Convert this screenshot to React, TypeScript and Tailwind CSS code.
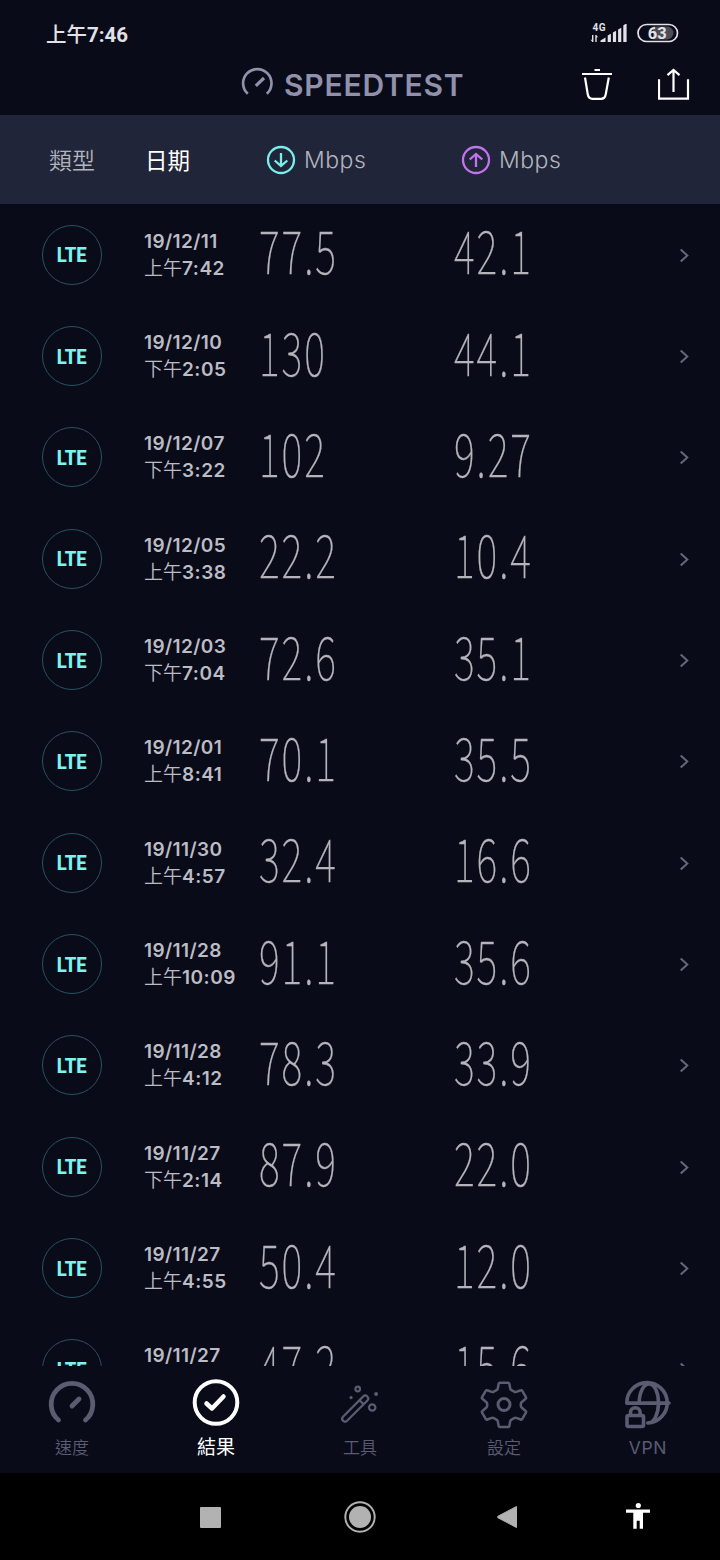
import React from 'react';

type Result = { date: string; half?: string; time?: string; down: string; up: string };

const results: Result[] = [
  { date: '19/12/11', half: '上午', time: '7:42', down: '77.5', up: '42.1' },
  { date: '19/12/10', half: '下午', time: '2:05', down: '130', up: '44.1' },
  { date: '19/12/07', half: '下午', time: '3:22', down: '102', up: '9.27' },
  { date: '19/12/05', half: '上午', time: '3:38', down: '22.2', up: '10.4' },
  { date: '19/12/03', half: '下午', time: '7:04', down: '72.6', up: '35.1' },
  { date: '19/12/01', half: '上午', time: '8:41', down: '70.1', up: '35.5' },
  { date: '19/11/30', half: '上午', time: '4:57', down: '32.4', up: '16.6' },
  { date: '19/11/28', half: '上午', time: '10:09', down: '91.1', up: '35.6' },
  { date: '19/11/28', half: '上午', time: '4:12', down: '78.3', up: '33.9' },
  { date: '19/11/27', half: '下午', time: '2:14', down: '87.9', up: '22.0' },
  { date: '19/11/27', half: '上午', time: '4:55', down: '50.4', up: '12.0' },
  { date: '19/11/27', down: '47.2', up: '15.6' },
];

const CJK = "font-['Noto_Sans_CJK_TC',sans-serif]";
const LATIN = "font-['Inter','Noto_Sans_CJK_TC',sans-serif]";

function StatusBar() {
  return (
    <div className="flex h-[54px] items-start justify-between pl-[46px] pr-[41px] pt-[21px]">
      <div className="flex items-baseline leading-6 text-[#e2e2e6]">
        <span className={`${CJK} text-[20.5px] font-medium`}>上午</span>
        <span className="font-['Roboto',sans-serif] text-[20.5px] font-bold">7:46</span>
      </div>
      <div className="flex pt-[1px]">
        <svg width="38" height="22" viewBox="0 0 38 22" fill="#e2e2e6">
          <text x="3.500" y="8.500" fontSize="10" fontWeight="700" fontFamily="Roboto, sans-serif" textLength="13">4G</text>
          <path d="M3 13h1.400v7H3.400L1.600 17.800H3zM6.300 20v-7h1L9 15.200H7.700V20z" />
          <path d="M11.500 20v-1.500l5-3V20zM18.700 20v-6.500l3.200-1.800V20zM23.900 20v-9.500l3.200-1.700V20zM29.100 20V7.500l3.200-1.700V20zM34.300 20V3.500l2-1.500h1.300v18z" />
        </svg>
        <svg className="ml-[9px]" width="43" height="22" viewBox="0 0 43 22">
          <path d="M17 4.500h14a6.500 6.500 0 0 1 0 13H17z" fill="#4c4c57" />
          <rect x="2" y="2.500" width="39.500" height="17" rx="8.500" fill="none" stroke="#e2e2e6" strokeWidth="1.700" />
          <text x="21.300" y="16.800" textAnchor="middle" fontSize="16.500" fontWeight="700" fontFamily="Roboto, sans-serif" fill="#e2e2e6">63</text>
        </svg>
      </div>
    </div>
  );
}

function TitleBar() {
  return (
    <div className="flex h-[61px] items-start pl-[240px] pr-[30px]">
      <svg className="mt-[13px] shrink-0" width="34" height="30" viewBox="0 0 34 30" fill="none" stroke="#9191ab" strokeWidth="2.700">
        <path d="M7.800 26.800A14.200 14.200 0 1 1 26.800 26.800" />
        <path d="M15.800 18.800L24 11" strokeWidth="3.200" />
      </svg>
      <h1 className={`${LATIN} ml-[10px] mt-[11px] w-[190px] whitespace-nowrap text-[30px] font-semibold leading-10 tracking-[0.8px] text-[#9191ab]`}>
        SPEEDTEST
      </h1>
      <div className="ml-auto flex gap-[45px]">
        <svg className="mt-[14px]" width="32" height="34" viewBox="0 0 32 34" fill="none" stroke="#fff" strokeWidth="2.200">
          <path d="M1 6h30M13.500 2h5.500" />
          <path d="M4 9.500l2.700 16.500q.8 4.800 4.800 4.800h8.600q4 0 4.700-4.800l3-16.500" />
        </svg>
        <svg className="mt-[14px]" width="32" height="34" viewBox="0 0 32 34" fill="none" stroke="#fff" strokeWidth="2.200">
          <path d="M1 11.200v19.500H30V11.200M15.500 24V2.500M9.500 7.200L15.500 2l6 5.200" />
        </svg>
      </div>
    </div>
  );
}

function Arrow({ up }: { up?: boolean }) {
  return (
    <svg width="30" height="30" viewBox="0 0 30 30" fill="none" stroke={up ? '#c274ee' : '#78efec'} strokeWidth="2.300">
      <circle cx="15" cy="15" r="13" />
      <path d={up ? 'M15 22V9.500M8.700 14.500L15 9l6.300 5.500' : 'M15 8v12.500M8.700 15.500L15 21l6.300-5.500'} />
    </svg>
  );
}

function ColumnHeads() {
  return (
    <div className="flex h-[89px] shrink-0 items-center bg-[#212539] text-[#b3b4bd]">
      <div className={`${CJK} w-[145px] pb-[1px] pl-[49px] text-[23px] font-[350] leading-[30px]`}>類型</div>
      <div className={`${CJK} w-[121px] pb-[1px] text-[22.5px] leading-[30px] text-white`}>日期</div>
      <div className="flex w-[195px] items-center gap-[8px]">
        <Arrow />
        <span className={`${LATIN} pt-[1px] text-[23px] font-light tracking-[0.5px]`}>Mbps</span>
      </div>
      <div className="flex items-center gap-[8px]">
        <Arrow up />
        <span className={`${LATIN} pt-[1px] text-[23px] font-light tracking-[0.5px]`}>Mbps</span>
      </div>
    </div>
  );
}

function Speed({ value }: { value: string }) {
  return (
    <div className="w-[195px] pb-[11px]">
      <span className={`${CJK} inline-block origin-left scale-x-[0.66] text-[60px] font-thin leading-[60px] tracking-[3px] text-[#b5b5bc] [-webkit-text-stroke:0.3px_#b5b5bc]`}>
        {value}
      </span>
    </div>
  );
}

function Row({ r }: { r: Result }) {
  return (
    <div className="flex h-[101.35px] shrink-0 items-center pl-[42px] pr-[29px]">
      <div className="flex size-[60px] items-center justify-center rounded-full border-[1.5px] border-[#2b525b]">
        <span className="inline-block scale-x-[0.9] pt-[1px] font-['Roboto',sans-serif] text-[20.5px] font-extrabold leading-6 text-[#7df3ee]">LTE</span>
      </div>
      <div className="ml-[42px] h-[54px] w-[115px] whitespace-nowrap text-[#bcbcc4]">
        <div className={`${LATIN} text-[19px] font-semibold leading-[28px] tracking-[0.4px]`}>{r.date}</div>
        {r.time && (
          <div className="-mt-[3px] flex items-baseline leading-[27px]">
            <span className={`${CJK} text-[19px] font-[350] leading-[27px]`}>{r.half}</span>
            <span className={`${LATIN} text-[19px] font-semibold leading-[27px] tracking-[0.5px]`}>{r.time}</span>
          </div>
        )}
      </div>
      <Speed value={r.down} />
      <Speed value={r.up} />
      <svg className="ml-auto" width="12" height="16" viewBox="0 0 12 16" fill="none" stroke="#676779" strokeWidth="2">
        <path d="M1.700 2.500l6.600 6L1.700 14.500" />
      </svg>
    </div>
  );
}

const icons: Record<string, React.ReactNode> = {
  speed: (
    <g strokeWidth="4.800" strokeLinecap="round">
      <path d="M12.500 42A20.800 20.800 0 1 1 39.500 42" />
      <path d="M26 28l7-7" />
    </g>
  ),
  results: (
    <g strokeWidth="4" strokeLinecap="round" strokeLinejoin="round">
      <circle cx="26" cy="24.500" r="21.300" />
      <path d="M16.500 25.500l5.500 5L33.500 18.500" strokeWidth="4.500" />
    </g>
  ),
  tools: (
    <g strokeWidth="2.200">
      <path d="M9 38.700L29.300 18.400a2.900 2.900 0 0 1 4.100 4.100L13.100 42.800a2.900 2.900 0 0 1-4.100-4.100zM25.500 22.200l4.100 4.100" />
      <circle cx="23.700" cy="11" r="2.300" />
      <circle cx="38.200" cy="29.500" r="3.200" />
      <circle cx="17.100" cy="19.600" r="1.600" fill="currentColor" stroke="none" />
      <circle cx="42.100" cy="16" r="2" fill="currentColor" stroke="none" />
    </g>
  ),
  settings: (
    <g strokeWidth="2.500" strokeLinejoin="round">
      <circle cx="26" cy="26.500" r="6" strokeWidth="3" />
      <path d="M22 4.700h8q1 0 1.300 1l1 5q.2 1 1.200 1.500l2.700 1.500q1 .6 2 .200l4.600-1.600q1-.4 1.500.6l3.600 6.300q.5 1-.300 1.600l-4 3.500q-.8.700-.8 1.700v1.800q0 1 .8 1.700l4 3.500q.8.700.300 1.600l-3.600 6.300q-.5 1-1.500.6l-4.600-1.600q-1-.4-2 .200l-2.700 1.500q-1 .5-1.200 1.500l-1 5q-.3 1-1.300 1h-8q-1 0-1.300-1l-1-5q-.2-1-1.200-1.500l-2.700-1.500q-1-.6-2-.2l-4.600 1.600q-1 .4-1.500-.6l-3.600-6.300q-.5-1 .3-1.600l4-3.500q.8-.7.8-1.700v-1.800q0-1-.8-1.700l-4-3.500q-.8-.7-.3-1.600l3.600-6.300q.5-1 1.500-.6l4.600 1.600q1 .4 2-.2l2.700-1.500q1-.5 1.200-1.500l1-5q.3-1 1.300-1z" />
    </g>
  ),
  vpn: (
    <g strokeWidth="3.600" strokeLinecap="round" strokeLinejoin="round">
      <path d="M25.800 45a20.200 20.200 0 1 0-21-19.900H47M17.200 25C17.200 14.500 21.500 6 27 6S36.500 14.500 36.500 25 32 45 26.500 45" />
      <rect x="5" y="37.500" width="16.500" height="11" rx="1.500" />
      <path d="M8.500 37.500v-3a4.800 4.800 0 0 1 9.600 0v3" />
    </g>
  ),
};

const tabs = [
  { id: 'speed', label: '速度' },
  { id: 'results', label: '結果', active: true },
  { id: 'tools', label: '工具' },
  { id: 'settings', label: '設定' },
  { id: 'vpn', label: 'VPN' },
];

function TabBar() {
  return (
    <nav className="grid h-[107px] shrink-0 grid-cols-5">
      {tabs.map((t) => (
        <div key={t.id} className={`flex flex-col items-center pt-[12px] ${t.active ? 'text-white' : 'text-[#5b5b72]'}`}>
          <svg width="52" height="52" viewBox="0 0 52 52" fill="none" stroke="currentColor">
            {icons[t.id]}
          </svg>
          <span
            className={`leading-[30px] ${
              t.active
                ? 'mt-[1px] text-[19px]'
                : t.id === 'vpn'
                  ? 'mt-[3px] text-[17.5px] tracking-[0.7px]'
                  : 'mt-[2px] text-[17px] font-[350]'
            } ${t.id === 'vpn' ? LATIN : CJK}`}
          >
            {t.label}
          </span>
        </div>
      ))}
    </nav>
  );
}

function SystemNav() {
  return (
    <div className="flex h-[87px] shrink-0 items-center bg-black pl-[200px]">
      <div className="mt-px size-[21px] rounded-[1px] bg-[#b2b2b2]" />
      <svg className="ml-[122px] mt-px" width="34" height="34" viewBox="0 0 34 34">
        <circle cx="17" cy="17" r="14.700" fill="none" stroke="#b2b2b2" strokeWidth="2" />
        <circle cx="17" cy="17" r="11" fill="#b2b2b2" />
      </svg>
      <svg className="ml-[119px] mt-px" width="22" height="26" viewBox="0 0 22 26">
        <path d="M20.500 2.500v21L2 13.800q-1-.8 0-1.600z" fill="#b2b2b2" stroke="#b2b2b2" strokeLinejoin="round" />
      </svg>
      <svg className="-mt-[2px] ml-[107px]" width="26" height="28" viewBox="0 0 26 28" fill="#fff">
        <circle cx="13.300" cy="3.500" r="2.600" />
        <path d="M1 7.500h24v3.300h-7v16h-3.300v-8h-3v8H8.300v-16H1z" />
      </svg>
    </div>
  );
}

export default function App() {
  return (
    <div className="flex h-[1560px] w-[720px] flex-col overflow-hidden bg-[#090b19]">
      <StatusBar />
      <TitleBar />
      <ColumnHeads />
      <main className="flex h-[1162px] shrink-0 flex-col overflow-hidden">
        {results.map((r, i) => (
          <Row key={i} r={r} />
        ))}
      </main>
      <TabBar />
      <SystemNav />
    </div>
  );
}
